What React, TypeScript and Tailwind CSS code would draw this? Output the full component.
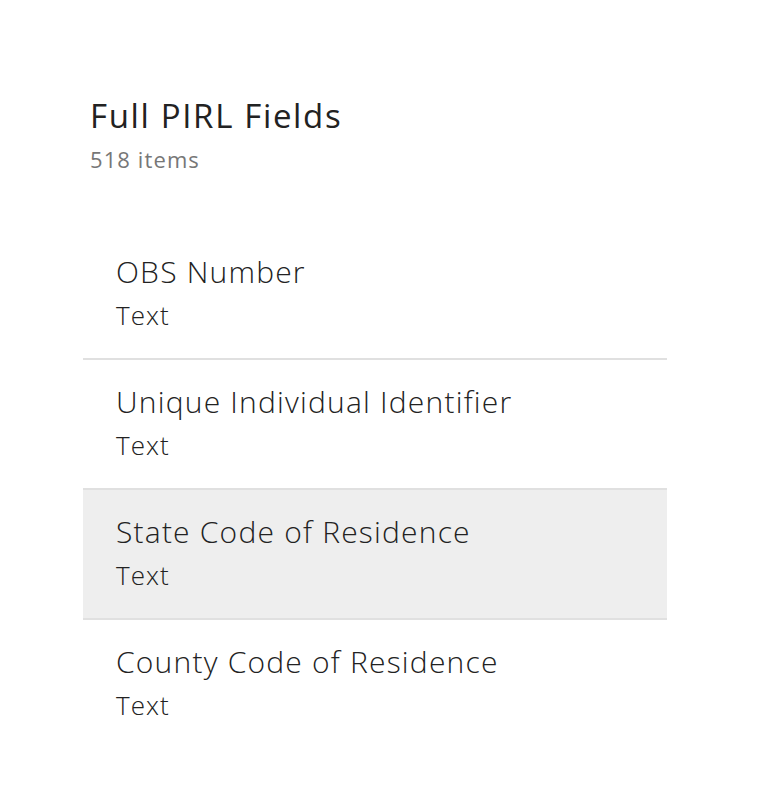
const fields = [
  { name: "OBS Number", type: "Text" },
  { name: "Unique Individual Identifier", type: "Text" },
  { name: "State Code of Residence", type: "Text" },
  { name: "County Code of Residence", type: "Text" },
];

export default function App() {
  return (
    <div
      className="min-h-screen w-full bg-white text-[#222]"
      style={{ fontFamily: "'Open Sans', Lato, sans-serif" }}
    >
      {/* Header */}
      <div className="pl-[90px] pt-[96px]">
        <h1 className="text-[33px] font-normal leading-[40px] tracking-[0.05em]">Full PIRL Fields</h1>
        <p className="mt-[9px] text-[22px] leading-[28px] tracking-[0.05em] text-[#777]">518 items</p>
      </div>

      {/* List */}
      <ul className="ml-[83px] mt-[57px] w-[584px]">
        {fields.map((f, i) => (
          <li
            key={f.name}
            className={
              "h-[130px] px-[33px] pt-[23px] " +
              (i < fields.length - 1 ? "border-b-2 border-[#e0e0e0] " : "") +
              (i === 2 ? "bg-[#eeeeee]" : "")
            }
          >
            <div className="text-[30px] font-light leading-[38px] tracking-[0.04em]">{f.name}</div>
            <div className="mt-[8px] text-[26px] font-light leading-[32px] tracking-[0.04em]">{f.type}</div>
          </li>
        ))}
      </ul>
    </div>
  );
}
